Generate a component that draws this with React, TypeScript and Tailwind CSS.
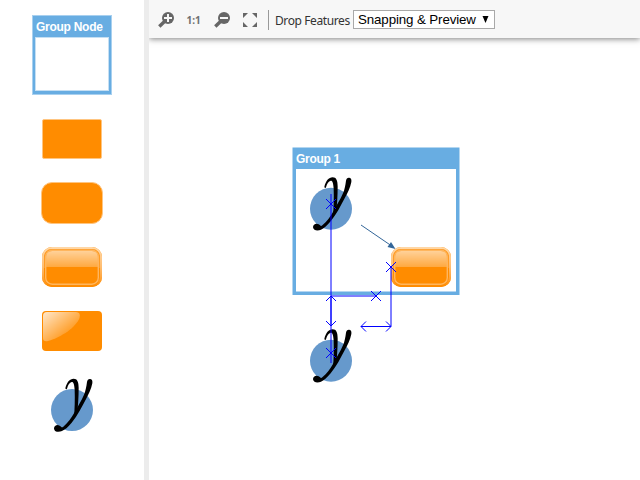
import React from "react";

function YLogo() {
  return (
    <g>
      <circle r="21" fill="#6699cc" />
      <g transform="scale(0.33333)" fill="#000">
        <path d="M-20 -65 C-16 -83 -7 -94 5 -94 C16 -94 20 -84 20 -66 C20 -38 18 -12 16 8 L6 22 C8 -2 9 -32 8 -60 C7 -78 4 -85 -1 -84 C-7 -83 -12 -75 -15 -64 C-16 -61 -19 -62 -20 -65 Z" />
        <path d="M45 -84 C46 -91 50 -94 55 -93 C61 -92 62 -86 61 -80 C58 -64 49 -45 41 -31 C30 -10 16 18 -1 38 C-12 52 -22 59 -30 63 C-39 67 -52 67 -54 56 C-54 46 -44 43 -37 47 C-32 50 -31 54 -26 50 C-12 38 -2 24 6 10 C16 -9 28 -27 36 -46 C41 -58 43 -70 45 -84 Z" />
      </g>
    </g>
  );
}

function Gradients() {
  return (
    <defs>
      <linearGradient id="shine" x1="0" y1="0" x2="0" y2="1">
        <stop offset="0" stopColor="#fff" stopOpacity="0.6" />
        <stop offset="1" stopColor="#fff" stopOpacity="0.25" />
      </linearGradient>
      <linearGradient id="frame" x1="0" y1="0" x2="0" y2="1">
        <stop offset="0" stopColor="#ffd7a6" />
        <stop offset="0.5" stopColor="#ffbd70" />
        <stop offset="0.8" stopColor="#ffa43a" />
        <stop offset="1" stopColor="#ff8c00" />
      </linearGradient>
      <linearGradient id="corner" x1="0" y1="0" x2="1" y2="1">
        <stop offset="0" stopColor="#fff" stopOpacity="0.8" />
        <stop offset="0.65" stopColor="#fff" stopOpacity="0.2" />
      </linearGradient>
    </defs>
  );
}

function GlossyNode() {
  return (
    <g>
      <rect width="60" height="40" rx="10" fill="#ff8c00" />
      <rect x="1" y="1" width="58" height="38" rx="9" fill="none" stroke="url(#frame)" strokeWidth="2" />
      <path d="M4 20 V10 Q4 4 10 4 H50 Q56 4 56 10 V20 Z" fill="url(#shine)" />
      <rect x="3.7" y="3.2" width="52.6" height="34" rx="6.5" fill="none" stroke="#ffb65e" strokeWidth="1.4" />
      <path d="M2.5 21 V10 Q2.5 2.500 10 2.500 H50 Q57.500 2.500 57.500 10 V21" fill="none" stroke="#ffa740" strokeWidth="0.6" />
    </g>
  );
}

function Cross({ x, y }: { x: number; y: number }) {
  return <path d={`M${x - 5} ${y - 5} l10 10 M${x - 5} ${y + 5} l10 -10`} />;
}

function Palette() {
  return (
    <aside className="flex w-[149px] shrink-0 flex-col items-center border-r-[5px] border-[#ececec] bg-white pt-[15px]">
      <div className="-ml-px flex h-20 w-[80px] flex-col border border-[#a8d0ef] bg-[#68ade2] px-[3px] pb-[3px]">
        <div className="h-[21px] whitespace-nowrap pt-px pl-[0.5px] font-['Liberation_Sans',Arial,sans-serif] text-[12px] leading-[20px] font-bold tracking-[-0.27px] text-white">Group Node</div>
        <div className="-mx-px flex-1 border border-[#c5dff3] bg-white" />
      </div>
      <div className="mt-6 h-10 w-[60px] rounded-[2px] border border-[#ffc580] bg-[#ff8c00]" />
      <div className="mt-[23px] h-[42px] w-[62px] rounded-[11px] border border-[#ffc580] bg-[#ff8c00]" />
      <svg className="mt-[23px] h-10 w-[60px]" viewBox="0 0 60 40">
        <Gradients />
        <GlossyNode />
      </svg>
      <svg className="mt-6 h-10 w-[60px]" viewBox="0 0 60 40">
        <rect width="60" height="40" rx="4" fill="#ff8c00" />
        <path d="M1 5 Q1 1 5 1 H34 Q39 1 37.5 7 C34 16 20 26 6 30 Q1 31 1 27 Z" fill="url(#corner)" />
      </svg>
      <svg className="mt-6 h-[60px] w-[60px]" viewBox="-30 -35 60 60">
        <YLogo />
      </svg>
    </aside>
  );
}

function Magnifier({ minus = false }: { minus?: boolean }) {
  return (
    <svg className="h-4 w-4" viewBox="0 0 16 16">
      <path d="M6.5 9.5 L1.300 14.500" stroke="#666" strokeWidth="3.4" />
      <circle cx="10" cy="6" r="6" fill="#666" />
      <path d={minus ? "M6 6h8" : "M6 6h8M10 2v8"} stroke="#f7f7f7" strokeWidth="2" />
    </svg>
  );
}

function Toolbar() {
  return (
    <header className="relative flex h-[38px] shrink-0 items-center bg-[#f7f7f7] pl-[9px] font-['Noto_Sans',sans-serif] text-[12px] text-[#333] shadow-[0_1px_6px_rgba(0,0,0,0.5)]">
      <span className="flex pt-[2px]"><Magnifier /></span>
      <span className="ml-[12.5px] w-[16px] whitespace-nowrap pt-[2px] text-[10px] font-bold text-[#707070]">1:1</span>
      <span className="ml-[11.5px] flex pt-[2px]"><Magnifier minus /></span>
      <svg className="ml-[13px] mt-[2px] h-[14px] w-[14px]" viewBox="0 0 14 14" fill="#666">
        <path d="M0 0h5L0 5zM14 0v5L9 0zM0 14V9l5 5zM14 14H9l5-5z" />
      </svg>
      <span className="ml-[11px] mt-[2px] h-5 w-px bg-[#999]" />
      <span className="ml-[6px] w-[78px] pt-[3px] whitespace-nowrap text-[12px] tracking-[-0.4px]">Drop Features</span>
      <button className="mt-px flex h-[19px] w-[142px] items-center justify-between border border-[#a9a9a9] bg-white pr-[5px] pl-1 font-['Liberation_Sans',Arial,sans-serif] text-[13.333px] tracking-[-0.12px] text-black">
        <span className="whitespace-nowrap">Snapping &amp; Preview</span>
        <svg className="h-[7px] w-[7px]" viewBox="0 0 7 7"><path d="M0.500 0h6L3.5 7z" /></svg>
      </button>
    </header>
  );
}

function Diagram() {
  return (
    <svg className="h-[442px] w-[491px]" viewBox="149 38 491 442">
      <rect x="292.5" y="147.5" width="167" height="147.5" fill="#68ade2" />
      <rect x="296" y="169" width="160" height="122.5" fill="#fff" />
      <text x="296" y="163" fill="#fff" className="font-['Liberation_Sans',Arial,sans-serif] text-[12px] font-bold tracking-[-0.3px]">Group 1</text>
      <g transform="translate(331 208.7)"><YLogo /></g>
      <path d="M361 225 L391 245.5" stroke="#336699" />
      <path d="M395.500 249 L387.500 247 L391 242 Z" fill="#336699" />
      <g transform="translate(391 247)"><GlossyNode /></g>
      <g transform="translate(331 360.7)"><YLogo /></g>
      <g stroke="#0000ff" fill="none">
        <path d="M331 194V363M331 296V326M331 296H376M391 267V326M361 326.500H391" />
        <Cross x={331} y={204} />
        <Cross x={331} y={353} />
        <Cross x={391} y={267} />
        <Cross x={376} y={296} />
        <path d="M326 301l5-5 5 5M326 321l5 5 5-5M366 321.500l-5 5 5 5M386 321.500l5 5-5 5" />
      </g>
    </svg>
  );
}

export default function App() {
  return (
    <div className="flex h-[480px] w-[640px] overflow-hidden bg-white">
      <Palette />
      <main className="flex min-w-0 flex-1 flex-col overflow-hidden">
        <Toolbar />
        <Diagram />
      </main>
    </div>
  );
}
